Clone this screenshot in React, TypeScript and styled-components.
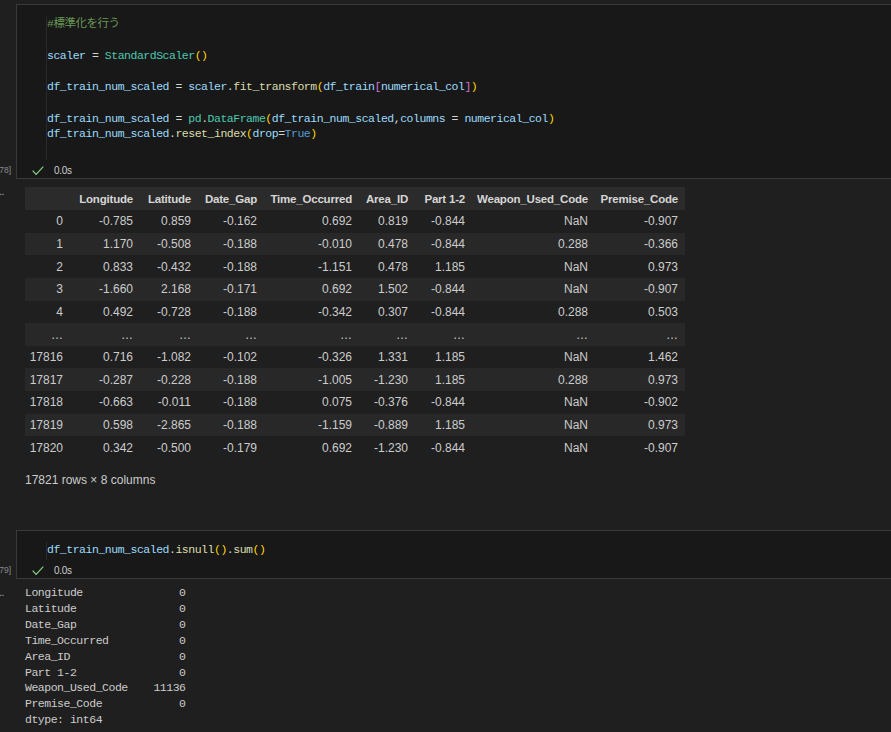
import React from "react";
import styled, { createGlobalStyle } from "styled-components";

const MONO = `"Liberation Mono", "Noto Sans CJK JP", monospace`;
const SANS = `"Liberation Sans", Arial, sans-serif`;

const C = {
  v: "#9cdcfe",
  p: "#d4d4d4",
  cls: "#4ec9b0",
  fn: "#dcdcaa",
  y: "#ffd700",
  m: "#da70d6",
  kw: "#569cd6",
  cm: "#6a9955",
};

const GlobalStyle = createGlobalStyle`
  html, body {
    margin: 0;
    padding: 0;
    background: #1f1f1f;
    overflow: hidden;
  }
  body {
    font-family: ${SANS};
    color: #cccccc;
  }
`;

const Page = styled.div`
  width: 891px;
  padding-top: 4px;
  box-sizing: border-box;
`;

const CellRow = styled.div`
  display: flex;
`;

const ExecGutter = styled.div`
  width: 16px;
  flex: none;
  display: flex;
  justify-content: flex-end;
  align-items: flex-end;
  box-sizing: border-box;
  padding: 0 5px 4px 0;
  font-family: ${SANS};
  font-size: 8.5px;
  line-height: 10px;
  color: #8a8a8a;
  white-space: nowrap;
`;

const CellBox = styled.div`
  flex: 1;
  margin-right: -4px;
  border: 1px solid #3a3a3c;
  background: #181818;
  display: flex;
  flex-direction: column;
`;

const CodeRow = styled.div`
  display: flex;
  margin-top: 11px;
  padding-left: 29px;
`;

const CodeArea = styled.div`
  flex: 1;
  border-left: 1px solid #2a2a2a;
  padding-bottom: 2px;
`;

const CodeLine = styled.div`
  height: 15.75px;
  line-height: 15.75px;
  font-family: ${MONO};
  font-size: 11.5px;
  letter-spacing: -0.48px;
  white-space: pre;
  color: ${C.p};
`;

const Tok = styled.span<{ $c: string }>`
  color: ${(p) => p.$c};
`;

const StatusRow = styled.div`
  height: 18.25px;
  box-sizing: border-box;
  padding: 3.25px 0 0 15px;
  display: flex;
  align-items: center;
  gap: 10px;
  line-height: 12px;
`;

const StatusText = styled.span`
  font-family: ${SANS};
  font-size: 10px;
  letter-spacing: -0.3px;
  color: #cccccc;
`;

const OutputRow = styled.div<{ $top: number; $bottom: number }>`
  display: flex;
  padding-top: ${(p) => p.$top}px;
  padding-bottom: ${(p) => p.$bottom}px;
`;

const OutGutter = styled.div<{ $dotTop: number }>`
  width: 25px;
  flex: none;
  padding-top: ${(p) => p.$dotTop}px;
  box-sizing: border-box;
`;

const Dots = styled.div`
  margin-left: -3px;
  font-family: ${SANS};
  font-size: 10px;
  line-height: 10px;
  height: 10px;
  color: #b0b0b0;
  letter-spacing: -0.5px;
`;

const OutContent = styled.div`
  display: flex;
  flex-direction: column;
`;

const Table = styled.table`
  border-collapse: collapse;
  table-layout: fixed;
  width: 660px;
  font-family: ${SANS};
  font-size: 12px;
  color: #cccccc;
`;

const Col = styled.col<{ $w: number }>`
  width: ${(p) => p.$w}px;
`;

const HeadRow = styled.tr`
  background: #2b2b2b;
  height: 23px;
`;

const HeadCell = styled.th`
  padding: 0 7px 0 0;
  text-align: right;
  font-weight: bold;
  font-size: 11.5px;
  letter-spacing: -0.2px;
  white-space: nowrap;
  color: #d6d6d6;
`;

const BodyRow = styled.tr<{ $light: boolean }>`
  background: ${(p) => (p.$light ? "#282828" : "transparent")};
  height: 22.65px;
`;

const BodyCell = styled.td`
  padding: 0 7px 0 0;
  text-align: right;
  white-space: nowrap;
`;

const Summary = styled.div`
  margin-top: 13px;
  font-size: 12px;
  line-height: 16px;
  color: #cccccc;
`;

const PlainOut = styled.div`
  font-family: ${MONO};
  font-size: 11.5px;
  letter-spacing: -0.48px;
  line-height: 15.9px;
  white-space: pre;
  color: #cccccc;
`;

type T = [string, string];

const cell1: T[][] = [
  [[C.cm, "#標準化を行う"]],
  [],
  [
    [C.v, "scaler"],
    [C.p, " = "],
    [C.cls, "StandardScaler"],
    [C.y, "()"],
  ],
  [],
  [
    [C.v, "df_train_num_scaled"],
    [C.p, " = "],
    [C.v, "scaler"],
    [C.p, "."],
    [C.fn, "fit_transform"],
    [C.y, "("],
    [C.v, "df_train"],
    [C.m, "["],
    [C.v, "numerical_col"],
    [C.m, "]"],
    [C.y, ")"],
  ],
  [],
  [
    [C.v, "df_train_num_scaled"],
    [C.p, " = "],
    [C.cls, "pd"],
    [C.p, "."],
    [C.cls, "DataFrame"],
    [C.y, "("],
    [C.v, "df_train_num_scaled"],
    [C.p, ","],
    [C.v, "columns"],
    [C.p, " = "],
    [C.v, "numerical_col"],
    [C.y, ")"],
  ],
  [
    [C.v, "df_train_num_scaled"],
    [C.p, "."],
    [C.fn, "reset_index"],
    [C.y, "("],
    [C.v, "drop"],
    [C.p, "="],
    [C.kw, "True"],
    [C.y, ")"],
  ],
  [],
];

const cell2: T[][] = [
  [
    [C.v, "df_train_num_scaled"],
    [C.p, "."],
    [C.fn, "isnull"],
    [C.y, "()"],
    [C.p, "."],
    [C.fn, "sum"],
    [C.y, "()"],
  ],
];

const columns = [
  { name: "", w: 45 },
  { name: "Longitude", w: 70 },
  { name: "Latitude", w: 58 },
  { name: "Date_Gap", w: 66 },
  { name: "Time_Occurred", w: 95 },
  { name: "Area_ID", w: 56 },
  { name: "Part 1-2", w: 57 },
  { name: "Weapon_Used_Code", w: 123 },
  { name: "Premise_Code", w: 90 },
];

const rows: string[][] = [
  ["0", "-0.785", "0.859", "-0.162", "0.692", "0.819", "-0.844", "NaN", "-0.907"],
  ["1", "1.170", "-0.508", "-0.188", "-0.010", "0.478", "-0.844", "0.288", "-0.366"],
  ["2", "0.833", "-0.432", "-0.188", "-1.151", "0.478", "1.185", "NaN", "0.973"],
  ["3", "-1.660", "2.168", "-0.171", "0.692", "1.502", "-0.844", "NaN", "-0.907"],
  ["4", "0.492", "-0.728", "-0.188", "-0.342", "0.307", "-0.844", "0.288", "0.503"],
  ["…", "…", "…", "…", "…", "…", "…", "…", "…"],
  ["17816", "0.716", "-1.082", "-0.102", "-0.326", "1.331", "1.185", "NaN", "1.462"],
  ["17817", "-0.287", "-0.228", "-0.188", "-1.005", "-1.230", "1.185", "0.288", "0.973"],
  ["17818", "-0.663", "-0.011", "-0.188", "0.075", "-0.376", "-0.844", "NaN", "-0.902"],
  ["17819", "0.598", "-2.865", "-0.188", "-1.159", "-0.889", "1.185", "NaN", "0.973"],
  ["17820", "0.342", "-0.500", "-0.179", "0.692", "-1.230", "-0.844", "NaN", "-0.907"],
];

const nullCounts: [string, string][] = [
  ["Longitude", "0"],
  ["Latitude", "0"],
  ["Date_Gap", "0"],
  ["Time_Occurred", "0"],
  ["Area_ID", "0"],
  ["Part 1-2", "0"],
  ["Weapon_Used_Code", "11136"],
  ["Premise_Code", "0"],
];

const CheckIcon = () => (
  <svg width="12" height="10" viewBox="0 0 12 10" fill="none">
    <path d="M0.7 4.6 L4.1 8.4 L11.3 0.6" stroke="#89d185" strokeWidth="1.2" />
  </svg>
);

const Code = ({ lines }: { lines: T[][] }) => (
  <CodeArea>
    {lines.map((line, i) => (
      <CodeLine key={i}>
        {line.length === 0
          ? " "
          : line.map(([c, t], j) => (
              <Tok key={j} $c={c}>
                {t}
              </Tok>
            ))}
      </CodeLine>
    ))}
  </CodeArea>
);

const Cell = ({ count, lines }: { count: number; lines: T[][] }) => (
  <CellRow>
    <ExecGutter>[{count}]</ExecGutter>
    <CellBox>
      <CodeRow>
        <Code lines={lines} />
      </CodeRow>
      <StatusRow>
        <CheckIcon />
        <StatusText>0.0s</StatusText>
      </StatusRow>
    </CellBox>
  </CellRow>
);

export default function App() {
  return (
    <>
      <GlobalStyle />
      <Page>
        <Cell count={78} lines={cell1} />
        <OutputRow $top={8} $bottom={42}>
          <OutGutter $dotTop={0}>
            <Dots>...</Dots>
          </OutGutter>
          <OutContent>
            <Table>
              <colgroup>
                {columns.map((c, i) => (
                  <Col key={i} $w={c.w} />
                ))}
              </colgroup>
              <thead>
                <HeadRow>
                  {columns.map((c, i) => (
                    <HeadCell key={i}>{c.name}</HeadCell>
                  ))}
                </HeadRow>
              </thead>
              <tbody>
                {rows.map((r, i) => (
                  <BodyRow key={i} $light={i % 2 === 1}>
                    {r.map((v, j) => (
                      <BodyCell key={j}>{v}</BodyCell>
                    ))}
                  </BodyRow>
                ))}
              </tbody>
            </Table>
            <Summary>17821 rows × 8 columns</Summary>
          </OutContent>
        </OutputRow>
        <Cell count={79} lines={cell2} />
        <OutputRow $top={6} $bottom={0}>
          <OutGutter $dotTop={3}>
            <Dots>...</Dots>
          </OutGutter>
          <OutContent>
            <PlainOut>
              {nullCounts
                .map(([k, v]) => k.padEnd(25 - v.length, " ") + v)
                .join("\n") + "\ndtype: int64"}
            </PlainOut>
          </OutContent>
        </OutputRow>
      </Page>
    </>
  );
}
